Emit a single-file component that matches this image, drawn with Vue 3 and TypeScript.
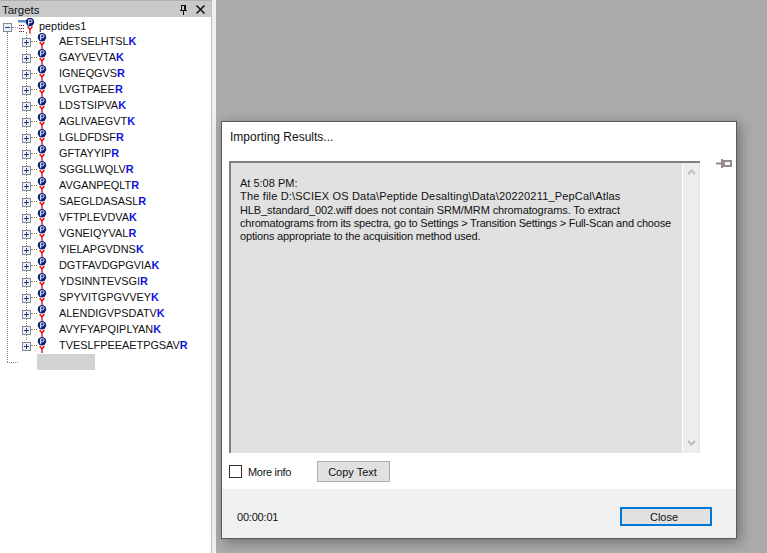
<script setup lang="ts">
interface Peptide { stem: string; end: string }
const peptides: Peptide[] = [
  ['AETSELHTSL', 'K'], ['GAYVEVTA', 'K'], ['IGNEQGVS', 'R'], ['LVGTPAEE', 'R'], ['LDSTSIPVA', 'K'],
  ['AGLIVAEGVT', 'K'], ['LGLDFDSF', 'R'], ['GFTAYYIP', 'R'], ['SGGLLWQLV', 'R'], ['AVGANPEQLT', 'R'],
  ['SAEGLDASASL', 'R'], ['VFTPLEVDVA', 'K'], ['VGNEIQYVAL', 'R'], ['YIELAPGVDNS', 'K'], ['DGTFAVDGPGVIA', 'K'],
  ['YDSINNTEVSGI', 'R'], ['SPYVITGPGVVEY', 'K'], ['ALENDIGVPSDATV', 'K'], ['AVYFYAPQIPLYAN', 'K'], ['TVESLFPEEAETPGSAV', 'R'],
].map(([stem, end]) => ({ stem, end }))
</script>

<template>
  <div class="page">
    <aside class="panel">
      <header class="panel-head">
        <span class="panel-title">Targets</span>
        <svg class="head-icon" width="7" height="10" viewBox="0 0 7 10">
          <path d="M1 0.500h5M1.500 1v4.500M4.500 1v4.500M5.500 1v4.500M0 5.500h7M3.500 6v4" fill="none" stroke="#111" stroke-width="1" />
        </svg>
        <svg class="head-icon" width="9" height="9" viewBox="0 0 9 9">
          <path d="M0.500 0.500l8 8M8.500 0.500l-8 8" fill="none" stroke="#111" stroke-width="1.500" />
        </svg>
      </header>
      <div class="tree">
        <i class="line root-v"></i>
        <i class="line root-h"></i>
        <i class="line root-h2"></i>
        <i class="line kids-v"></i>
        <div class="root-row">
          <span class="toggle">
            <svg width="9" height="9" viewBox="0 0 9 9"><rect x="0.500" y="0.500" width="8" height="8" fill="#eef1f5" stroke="#7d8a99" /><path d="M2 4.500h5" stroke="#1d3f8f" /></svg>
          </span>
          <svg class="root-icon" width="19" height="16" viewBox="0 0 19 16">
            <rect x="0" y="2" width="9" height="2.500" fill="#5b8fc7" />
            <path d="M3 7.500h4M3 10.500h4M3 13.500h4" stroke="#333" stroke-dasharray="1 1" />
            <path d="M1 7.500h1.500M1 10.500h1.500M1 13.500h1.500" stroke="#d22" />
            <circle cx="12" cy="4" r="4.200" fill="#0a1f78" />
            <path d="M10.700 6.800v-5h2a1.400 1.400 0 0 1 0 2.800h-1.700" fill="none" stroke="#fff" />
            <path d="M9.500 8.500l2.500 3 2.500-3M12 11.500v4" fill="none" stroke="#e01010" stroke-width="1.400" />
          </svg>
          <span class="root-label">peptides1</span>
        </div>
        <div v-for="p in peptides" :key="p.stem" class="row">
          <span class="toggle">
            <svg width="9" height="9" viewBox="0 0 9 9"><rect x="0.500" y="0.500" width="8" height="8" fill="#eef1f5" stroke="#7d8a99" /><path d="M2 4.500h5M4.500 2v5" stroke="#1d3f8f" /></svg>
          </span>
          <svg class="pep-icon" width="10" height="17" viewBox="0 0 10 17">
            <circle cx="5" cy="4.300" r="4.200" fill="#0a1f78" />
            <path d="M3.700 7.200v-5.400h1.900a1.400 1.400 0 0 1 0 2.900H4.200" fill="none" stroke="#fff" />
            <path d="M2.700 9l2.300 3 2.300-3M5 12v4" fill="none" stroke="#e01010" stroke-width="1.400" />
          </svg>
          <span class="seq">{{ p.stem }}<b>{{ p.end }}</b></span>
        </div>
        <div class="blank-node"></div>
      </div>
    </aside>
    <div class="splitter"></div>
    <main class="workspace">
      <section class="dialog">
        <div class="dialog-body">
          <h1 class="dialog-title">Importing Results...</h1>
          <div class="log-row">
            <div class="log">
              <div class="log-text">
                <p>At 5:08 PM:</p>
                <p class="l1">The file D:\SCIEX OS Data\Peptide Desalting\Data\20220211_PepCal\Atlas</p>
                <p class="l2">HLB_standard_002.wiff does not contain SRM/MRM chromatograms. To extract</p>
                <p class="l3">chromatograms from its spectra, go to Settings &gt; Transition Settings &gt; Full-Scan and choose</p>
                <p class="l4">options appropriate to the acquisition method used.</p>
              </div>
              <div class="scroll">
                <svg width="9" height="6" viewBox="0 0 9 6"><path d="M1 5l3.500-3.500L8 5" fill="none" stroke="#bdbdbd" stroke-width="2" /></svg>
                <svg width="9" height="6" viewBox="0 0 9 6"><path d="M1 1l3.500 3.500L8 1" fill="none" stroke="#bdbdbd" stroke-width="2" /></svg>
              </div>
            </div>
            <svg class="pin" width="16" height="9" viewBox="0 0 16 9">
              <path d="M0 4.500h5" fill="none" stroke="#988a8e" stroke-width="2" />
              <path d="M6 0v9" fill="none" stroke="#988a8e" stroke-width="2" />
              <rect x="8" y="2" width="7" height="5" fill="#fff" stroke="#988a8e" stroke-width="2" />
            </svg>
          </div>
          <div class="actions">
            <label class="check"><span class="box"></span><span class="check-label">More info</span></label>
            <button class="btn copy" type="button">Copy Text</button>
          </div>
        </div>
        <footer class="dialog-foot">
          <span class="elapsed">00:00:01</span>
          <button class="btn close-btn" type="button">Close</button>
        </footer>
      </section>
    </main>
  </div>
</template>

<style>
html, body { margin: 0; overflow: hidden; }
</style>

<style scoped>
.page {
  width: 767px; height: 553px; display: flex; overflow: hidden;
  font-family: "Liberation Sans", Arial, sans-serif; font-size: 11px; color: #111;
  background: #ababab;
}
.panel {
  width: 212px; flex: none; box-sizing: border-box; background: #fff; border-right: 1px solid #bdbdbd;
  display: flex; flex-direction: column; font-size: 10.900px;
}
.panel-head {
  height: 17px; flex: none; box-sizing: border-box; display: flex; align-items: center; gap: 9px; padding: 1px 6px 0 2px;
  background: #c9c9c9; border-top: 1px solid #b0b0b0;
}
.panel-title { flex: 1; font-size: 11.400px; }
.head-icon { flex: none; }
.tree { position: relative; flex: 1; }
.line { position: absolute; display: block; border: 0 dotted #8a8a8a; }
.root-v { left: 7px; top: 15px; height: 330px; border-left-width: 1px; }
.root-h { left: 12px; top: 10px; width: 6px; border-top-width: 1px; }
.root-h2 { left: 7px; top: 345px; width: 11px; border-top-width: 1px; }
.kids-v { left: 26px; top: 15px; height: 308px; border-left-width: 1px; }
.root-row { height: 16px; display: flex; align-items: center; padding-left: 3px; position: relative; }
.toggle { width: 9px; height: 9px; flex: none; display: block; margin-top: 3px; position: relative; }
.toggle svg { display: block; }
.root-row .toggle { margin-top: 4px; }
.root-icon { margin: 1px 0 0 6px; flex: none; align-self: flex-start; position: relative; }
.root-label { margin: 2px 0 0 2px; }
.row { height: 16px; display: flex; align-items: center; padding-left: 22px; position: relative; }
.row::before { content: ""; position: absolute; left: 31px; width: 6px; top: 8px; border-top: 1px dotted #8a8a8a; }
.pep-icon { margin: 1px 0 0 6px; flex: none; position: relative; }
.seq { margin-left: 12px; position: relative; }
.seq b { color: #1010e0; font-weight: 700; }
.blank-node { width: 58px; height: 16px; margin: 1px 0 0 37px; background: #d2d2d2; }
.splitter { width: 4px; flex: none; background: #f0f0f0; }
.workspace { flex: 1; padding: 121px 0 0 5px; }
.dialog {
  width: 516px; height: 418px; box-sizing: border-box; background: #fff; border: 1px solid #5a5a5a;
  box-shadow: 3px 3px 12px rgba(0,0,0,.35); display: flex; flex-direction: column;
}
.dialog-body { flex: 1; padding: 0 0 0 7px; display: flex; flex-direction: column; }
.dialog-title { font-size: 12px; font-weight: 400; margin: 8px 0 16px 1px; height: 15px; line-height: 15px; }
.log-row { display: flex; align-items: flex-start; }
.log {
  width: 471px; height: 292px; box-sizing: border-box; display: flex; background: #e1e1e1;
  border-top: 2px solid #808080; border-left: 2px solid #808080;
}
.log-text { flex: 1; min-width: 0; padding: 14px 0 0 9px; line-height: 13.300px; font-size: 11px; }
.log-text p { margin: 0; white-space: nowrap; }
.log-text .l1 { letter-spacing: 0.180px; }
.log-text .l2 { letter-spacing: -0.110px; }
.log-text .l3 { letter-spacing: -0.210px; }
.log-text .l4 { letter-spacing: -0.180px; }
.scroll {
  width: 18px; flex: none; background: #ededed; border-left: 1px solid #fff; border-right: 1px solid #e1e1e1;
  display: flex; flex-direction: column; justify-content: space-between; align-items: center; padding: 6px 0 7px; box-sizing: border-box;
}
.pin { margin: -2px 0 0 16px; flex: none; }
.actions { display: flex; align-items: center; height: 21px; margin-top: 8px; }
.check { display: flex; align-items: center; width: 88px; color: #111; }
.check-label { letter-spacing: -0.300px; }
.box { width: 11px; height: 11px; border: 1px solid #333; margin: 0 6px 0 0; background: #fff; }
.btn {
  font: inherit; color: #111; background: #e1e1e1; border: 1px solid #adadad; padding: 0; box-sizing: border-box;
}
.copy { width: 73px; height: 21px; padding-right: 2px; }
.dialog-foot {
  height: 49px; flex: none; background: #f0f0f0; display: flex; align-items: center; justify-content: space-between;
  padding: 6px 24px 0 15px; box-sizing: border-box;
}
.elapsed { letter-spacing: -0.200px; }
.close-btn { width: 92px; height: 19px; border: 2px solid #0078d7; padding-right: 4px; }
</style>
